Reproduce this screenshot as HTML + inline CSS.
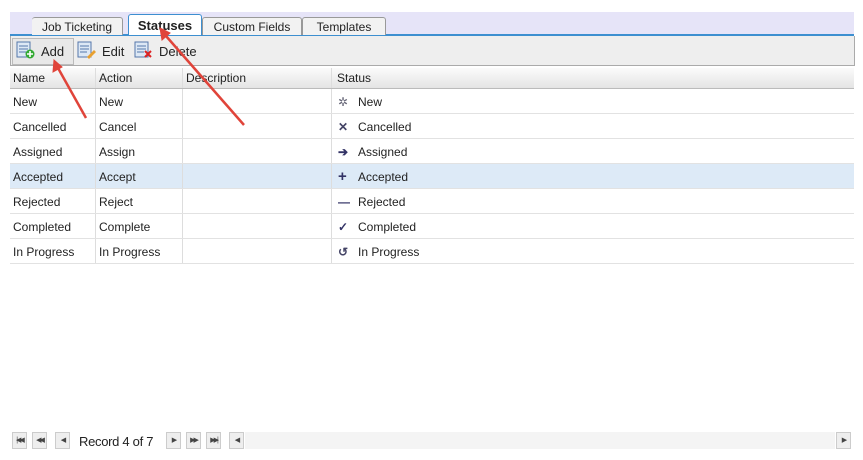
<!DOCTYPE html><html><head><style>
body{margin:0;width:863px;height:460px;background:#fff;font-family:"Liberation Sans",Tahoma,sans-serif;font-size:12px;color:#222;position:relative;overflow:hidden}
.a{position:absolute}
.tabs{left:10px;top:12px;width:844px;height:22px;background:#e6e4f8;border-bottom:2px solid #3d8fd0}
.tab{position:absolute;top:5px;height:17px;border:1px solid #999;border-bottom:none;border-radius:3px 3px 0 0;background:#f2f2f2;font-size:12px;line-height:18px;text-align:center}
.tb{left:10px;top:36px;width:843px;height:29px;background:#eeeeee;border:1px solid #aaa;border-top:none}
.hdr{left:10px;top:68px;width:844px;height:20px;line-height:21px;background:linear-gradient(#fbfbfb,#e4e4e4);border-bottom:1px solid #bbb}
.row{position:absolute;left:10px;width:844px;height:24px;border-bottom:1px solid #e2e2e2;line-height:26px}
.c{position:absolute;top:0;height:100%;border-right:1px solid #ddd;padding-left:3px;box-sizing:border-box}
.nb{position:absolute;top:432px;width:15px;height:17px;background:#eee;border:1px solid #ccc;box-sizing:border-box;font-size:7px;line-height:15px;text-align:center;color:#444;letter-spacing:-2px}
</style></head><body>
<div class="a tabs">
<div class="tab" style="left:22px;width:90px;border-left:none">Job Ticketing</div>
<div class="tab" style="left:118px;width:72px;top:2px;height:20px;background:#fff;border-color:#3d8fd0;font-weight:bold;font-size:13px;line-height:22px">Statuses</div>
<div class="tab" style="left:192px;width:98px">Custom Fields</div>
<div class="tab" style="left:292px;width:82px">Templates</div>
</div>
<div class="a tb">
<div class="a" style="left:1px;top:2px;width:60px;height:25px;border:1px solid #bbb;background:#e8e8e8"></div>
<svg class="a" style="left:5px;top:5px" width="20" height="18"><rect x="1" y="1" width="13" height="15" fill="#dde8f5" stroke="#5577aa"/><path d="M3 5h9M3 8h9M3 11h7" stroke="#5577aa"/><circle cx="14" cy="13" r="4.5" fill="#3a3"/><path d="M14 10v6M11 13h6" stroke="#fff" stroke-width="1.6"/></svg>
<span class="a" style="left:30px;top:8px;font-size:13px">Add</span>
<svg class="a" style="left:66px;top:5px" width="20" height="18"><rect x="1" y="1" width="13" height="15" fill="#dde8f5" stroke="#5577aa"/><path d="M3 5h9M3 8h9M3 11h7" stroke="#5577aa"/><path d="M10 16l7-7 2 2-7 7z" fill="#e8a030"/></svg>
<span class="a" style="left:91px;top:8px;font-size:13px">Edit</span>
<svg class="a" style="left:123px;top:5px" width="20" height="18"><rect x="1" y="1" width="13" height="15" fill="#dde8f5" stroke="#5577aa"/><path d="M3 5h9M3 8h9M3 11h7" stroke="#5577aa"/><path d="M11 10l6 6M17 10l-6 6" stroke="#d22" stroke-width="2"/></svg>
<span class="a" style="left:148px;top:8px;font-size:13px">Delete</span>
</div>
<div class="a hdr"><div class="c" style="left:0;width:86px">Name</div><div class="c" style="left:86px;width:87px">Action</div><div class="c" style="left:173px;width:149px">Description</div><div class="c" style="left:322px;width:522px;border:none;padding-left:5px">Status</div></div>
<div class="row" style="top:89px"><div class="c" style="left:0;width:86px">New</div><div class="c" style="left:86px;width:87px">New</div><div class="c" style="left:173px;width:149px"></div><div class="c" style="left:322px;border:none;padding-left:6px"><span style="color:#667;display:inline-block;width:20px">✲</span>New</div></div>
<div class="row" style="top:114px"><div class="c" style="left:0;width:86px">Cancelled</div><div class="c" style="left:86px;width:87px">Cancel</div><div class="c" style="left:173px;width:149px"></div><div class="c" style="left:322px;border:none;padding-left:6px"><span style="color:#446;display:inline-block;width:20px;font-weight:bold">✕</span>Cancelled</div></div>
<div class="row" style="top:139px"><div class="c" style="left:0;width:86px">Assigned</div><div class="c" style="left:86px;width:87px">Assign</div><div class="c" style="left:173px;width:149px"></div><div class="c" style="left:322px;border:none;padding-left:6px"><span style="color:#336;display:inline-block;width:20px;font-weight:bold">➔</span>Assigned</div></div>
<div class="row" style="top:164px;background:#ddeaf7"><div class="c" style="left:0;width:86px">Accepted</div><div class="c" style="left:86px;width:87px">Accept</div><div class="c" style="left:173px;width:149px"></div><div class="c" style="left:322px;border:none;padding-left:6px"><span style="color:#336;display:inline-block;width:20px;font-weight:bold;font-size:15px">+</span>Accepted</div></div>
<div class="row" style="top:189px"><div class="c" style="left:0;width:86px">Rejected</div><div class="c" style="left:86px;width:87px">Reject</div><div class="c" style="left:173px;width:149px"></div><div class="c" style="left:322px;border:none;padding-left:6px"><span style="color:#336;display:inline-block;width:20px;font-weight:bold">—</span>Rejected</div></div>
<div class="row" style="top:214px"><div class="c" style="left:0;width:86px">Completed</div><div class="c" style="left:86px;width:87px">Complete</div><div class="c" style="left:173px;width:149px"></div><div class="c" style="left:322px;border:none;padding-left:6px"><span style="color:#336;display:inline-block;width:20px;font-weight:bold">✓</span>Completed</div></div>
<div class="row" style="top:239px"><div class="c" style="left:0;width:86px">In Progress</div><div class="c" style="left:86px;width:87px">In Progress</div><div class="c" style="left:173px;width:149px"></div><div class="c" style="left:322px;border:none;padding-left:6px"><span style="color:#446;display:inline-block;width:20px;font-weight:bold">↺</span>In Progress</div></div>
<div class="nb" style="left:12px">|◀◀</div><div class="nb" style="left:32px">◀◀</div><div class="nb" style="left:55px">◀</div>
<span class="a" style="left:79px;top:434px;font-size:13px;letter-spacing:-0.3px">Record 4 of 7</span>
<div class="nb" style="left:166px">▶</div><div class="nb" style="left:186px">▶▶</div><div class="nb" style="left:206px">▶▶|</div><div class="nb" style="left:229px">◀</div>
<div class="a" style="left:245px;top:432px;width:590px;height:17px;background:#f4f4f4"></div>
<div class="nb" style="left:836px">▶</div>
<svg class="a" style="left:0;top:0" width="863" height="460"><g stroke="#e0443a" stroke-width="2.5" fill="#e0443a"><line x1="86" y1="118" x2="58" y2="68"/><path d="M54 60l-1 12 9-5z" stroke-width="1"/><line x1="244" y1="125" x2="166" y2="36"/><path d="M160 28l2 12 8-7z" stroke-width="1"/></g></svg>
</body></html>
